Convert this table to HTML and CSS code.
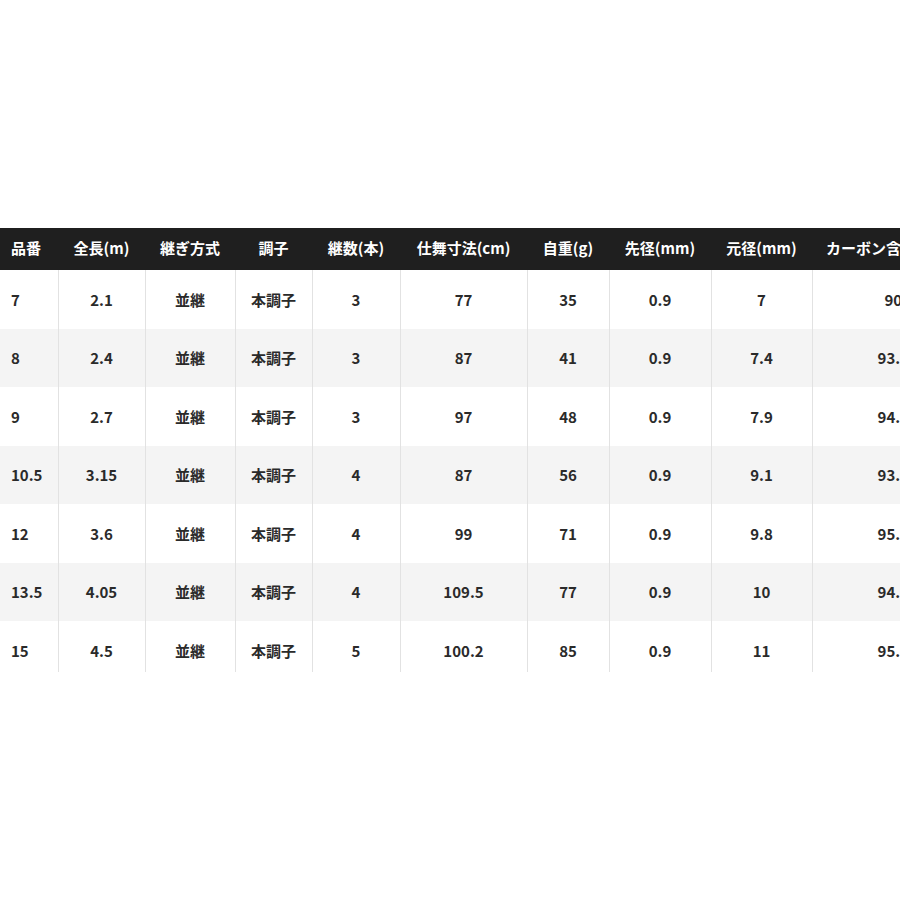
FILE: index.html
```html
<!DOCTYPE html>
<html lang="ja">
<head>
<meta charset="utf-8">
<link rel="stylesheet" href="styles.css">
</head>
<body>
<div class="wrap">
<table class="spec">
<colgroup>
<col class="c1"><col class="c2"><col class="c3"><col class="c4"><col class="c5"><col class="c6"><col class="c7"><col class="c8"><col class="c9"><col class="c10">
</colgroup>
<thead>
<tr><th class="first">品番</th><th>全長(m)</th><th>継ぎ方式</th><th>調子</th><th>継数(本)</th><th>仕舞寸法(cm)</th><th>自重(g)</th><th>先径(mm)</th><th>元径(mm)</th><th>カーボン含有率(%)</th></tr>
</thead>
<tbody>
<tr><td class="first">7</td><td>2.1</td><td>並継</td><td>本調子</td><td>3</td><td>77</td><td>35</td><td>0.9</td><td>7</td><td>90</td></tr>
<tr><td class="first">8</td><td>2.4</td><td>並継</td><td>本調子</td><td>3</td><td>87</td><td>41</td><td>0.9</td><td>7.4</td><td>93.8</td></tr>
<tr><td class="first">9</td><td>2.7</td><td>並継</td><td>本調子</td><td>3</td><td>97</td><td>48</td><td>0.9</td><td>7.9</td><td>94.5</td></tr>
<tr><td class="first">10.5</td><td>3.15</td><td>並継</td><td>本調子</td><td>4</td><td>87</td><td>56</td><td>0.9</td><td>9.1</td><td>93.8</td></tr>
<tr><td class="first">12</td><td>3.6</td><td>並継</td><td>本調子</td><td>4</td><td>99</td><td>71</td><td>0.9</td><td>9.8</td><td>95.1</td></tr>
<tr><td class="first">13.5</td><td>4.05</td><td>並継</td><td>本調子</td><td>4</td><td>109.5</td><td>77</td><td>0.9</td><td>10</td><td>94.6</td></tr>
<tr><td class="first">15</td><td>4.5</td><td>並継</td><td>本調子</td><td>5</td><td>100.2</td><td>85</td><td>0.9</td><td>11</td><td>95.2</td></tr>
</tbody>
</table>
</div>
</body>
</html>
```

FILE: styles.css
```css
html, body {
  margin: 0;
  padding: 0;
  background: #fff;
}
body {
  padding-top: 228px;
  font-family: "Noto Sans CJK JP", "Noto Sans", sans-serif;
}
.wrap {
  width: 900px;
  height: 444px;
  overflow: hidden;
}
.spec {
  border-collapse: collapse;
  table-layout: fixed;
  width: 974px;
  font-size: 15px;
  font-weight: 700;
  color: #2a2a2a;
}
.c1 { width: 58px; }
.c2 { width: 87px; }
.c3 { width: 90px; }
.c4 { width: 77px; }
.c5 { width: 88px; }
.c6 { width: 127px; }
.c7 { width: 82px; }
.c8 { width: 102px; }
.c9 { width: 101px; }
.c10 { width: 162px; }
.spec th {
  background: #1f1f1f;
  color: #fff;
  height: 39px;
  padding: 0 0 3px;
  text-align: center;
  white-space: nowrap;
  font-weight: 700;
  line-height: 1;
}
.spec th:last-child {
  text-align: left;
  padding-left: 14px;
}
.spec td {
  height: 58.5px;
  padding: 0;
  text-align: center;
  line-height: 1;
  border-left: 1px solid #e2e2e2;
}
.spec tbody tr:nth-child(even) td {
  background: #f4f4f4;
}
.spec .first {
  text-align: left;
  padding-left: 11px;
  border-left: none;
}
```
